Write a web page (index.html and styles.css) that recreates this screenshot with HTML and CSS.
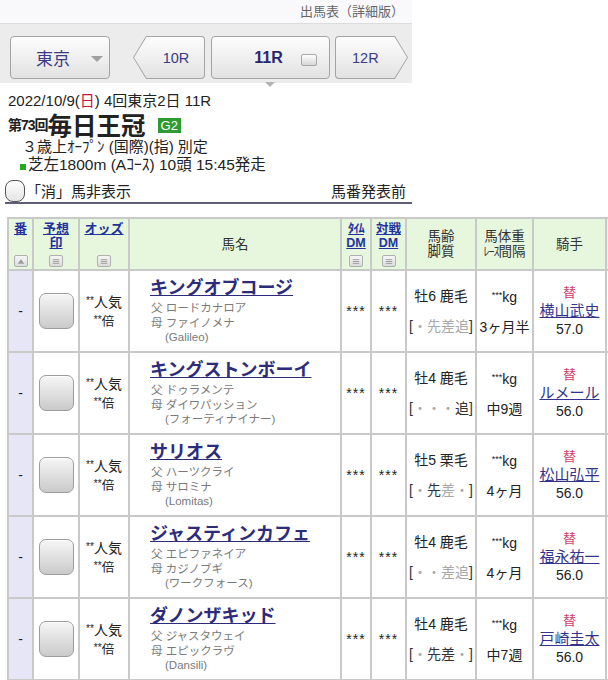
FILE: index.html
```html
<!DOCTYPE html>
<html lang="ja">
<head>
<meta charset="utf-8">
<title>出馬表（詳細版）</title>
<link rel="stylesheet" href="styles.css">
</head>
<body>
<div class="page">
  <header class="top">
    <div class="title">出馬表（詳細版）</div>
    <nav class="racenav">
      <div class="btn place">東京<span class="caret"></span></div>
      <div class="arrow prev"><div class="arrow-in">10R</div></div>
      <div class="btn cur">11R<span class="sq"></span></div>
      <div class="arrow next"><div class="arrow-in">12R</div></div>
    </nav>
    <div class="info">
      <div class="date">2022/10/9(<span class="sun">日</span>) 4回東京2日 11R</div>
      <div class="race"><span class="kai">第73回</span><span class="rname">毎日王冠</span><span class="grade">G2</span></div>
      <div class="cond">３歳上ｵｰﾌﾟﾝ (国際)(指) 別定</div>
      <div class="course"><span class="turf"></span>芝左1800m (Aｺｰｽ) 10頭 15:45発走</div>
      <div class="opts"><span class="hide"><span class="cb"></span>「消」馬非表示</span><span>馬番発表前</span></div>
    </div>
  </header>

  <table class="entries">
    <colgroup>
      <col class="c-no"><col class="c-mark"><col class="c-odds"><col class="c-horse"><col class="c-tdm"><col class="c-vdm"><col class="c-age"><col class="c-wt"><col class="c-jk"><col class="c-more">
    </colgroup>
    <thead>
      <tr>
        <th><div class="hc"><a class="lnk">番</a><span class="ic"><svg viewBox="0 0 13 11" width="13" height="11"><path d="M3 8 L6.5 3 L10 8 Z" fill="#9a9a9a"/></svg></span></div></th>
        <th><div class="hc"><a class="lnk">予想<br>印</a><span class="ic"><svg viewBox="0 0 13 11" width="13" height="11"><path d="M3 3.5H10M3 5.5H10M3 7.5H10" stroke="#9a9a9a" stroke-width="1"/></svg></span></div></th>
        <th><div class="hc"><a class="lnk">オッズ</a><span class="ic"><svg viewBox="0 0 13 11" width="13" height="11"><path d="M3 3.5H10M3 5.5H10M3 7.5H10" stroke="#9a9a9a" stroke-width="1"/></svg></span></div></th>
        <th class="plain">馬名</th>
        <th><div class="hc"><a class="lnk sm"><span class="hk">ﾀｲﾑ</span><br>DM</a><span class="ic"><svg viewBox="0 0 13 11" width="13" height="11"><path d="M3 3.5H10M3 5.5H10M3 7.5H10" stroke="#9a9a9a" stroke-width="1"/></svg></span></div></th>
        <th><div class="hc"><a class="lnk sm">対戦<br>DM</a><span class="ic"><svg viewBox="0 0 13 11" width="13" height="11"><path d="M3 3.5H10M3 5.5H10M3 7.5H10" stroke="#9a9a9a" stroke-width="1"/></svg></span></div></th>
        <th class="plain">馬齢<br>脚質</th>
        <th class="plain">馬体重<br><span class="hk2">ﾚｰｽ</span>間隔</th>
        <th class="plain">騎手</th>
        <th class="plain"></th>
      </tr>
    </thead>
    <tbody>
      <tr>
        <td class="no">-</td>
        <td><span class="markbtn"></span></td>
        <td class="odds"><div><small>**</small>人気</div><div class="bai"><small>**</small>倍</div></td>
        <td class="horse"><a class="hname">キングオブコージ</a><div class="ped">父 ロードカナロア<br>母 ファイノメナ<br><span class="bms">(Galileo)</span></div></td>
        <td class="dm">***</td>
        <td class="dm">***</td>
        <td class="two"><div>牡6 鹿毛</div><div class="legs">[<span class="off">・先差追</span>]</div></td>
        <td class="two"><div><small class="st">***</small>kg</div><div>3ヶ月半</div></td>
        <td class="jk"><div class="chg">替</div><a class="jname">横山武史</a><div>57.0</div></td>
        <td></td>
      </tr>
      <tr>
        <td class="no">-</td>
        <td><span class="markbtn"></span></td>
        <td class="odds"><div><small>**</small>人気</div><div class="bai"><small>**</small>倍</div></td>
        <td class="horse"><a class="hname">キングストンボーイ</a><div class="ped">父 ドゥラメンテ<br>母 ダイワパッション<br><span class="bms">(フォーティナイナー)</span></div></td>
        <td class="dm">***</td>
        <td class="dm">***</td>
        <td class="two"><div>牡4 鹿毛</div><div class="legs">[<span class="off">・・・</span>追]</div></td>
        <td class="two"><div><small class="st">***</small>kg</div><div>中9週</div></td>
        <td class="jk"><div class="chg">替</div><a class="jname">ルメール</a><div>56.0</div></td>
        <td></td>
      </tr>
      <tr>
        <td class="no">-</td>
        <td><span class="markbtn"></span></td>
        <td class="odds"><div><small>**</small>人気</div><div class="bai"><small>**</small>倍</div></td>
        <td class="horse"><a class="hname">サリオス</a><div class="ped">父 ハーツクライ<br>母 サロミナ<br><span class="bms">(Lomitas)</span></div></td>
        <td class="dm">***</td>
        <td class="dm">***</td>
        <td class="two"><div>牡5 栗毛</div><div class="legs">[<span class="off">・</span>先<span class="off">差・</span>]</div></td>
        <td class="two"><div><small class="st">***</small>kg</div><div>4ヶ月</div></td>
        <td class="jk"><div class="chg">替</div><a class="jname">松山弘平</a><div>56.0</div></td>
        <td></td>
      </tr>
      <tr>
        <td class="no">-</td>
        <td><span class="markbtn"></span></td>
        <td class="odds"><div><small>**</small>人気</div><div class="bai"><small>**</small>倍</div></td>
        <td class="horse"><a class="hname">ジャスティンカフェ</a><div class="ped">父 エピファネイア<br>母 カジノブギ<br><span class="bms">(ワークフォース)</span></div></td>
        <td class="dm">***</td>
        <td class="dm">***</td>
        <td class="two"><div>牡4 鹿毛</div><div class="legs">[<span class="off">・・差追</span>]</div></td>
        <td class="two"><div><small class="st">***</small>kg</div><div>4ヶ月</div></td>
        <td class="jk"><div class="chg">替</div><a class="jname">福永祐一</a><div>56.0</div></td>
        <td></td>
      </tr>
      <tr>
        <td class="no">-</td>
        <td><span class="markbtn"></span></td>
        <td class="odds"><div><small>**</small>人気</div><div class="bai"><small>**</small>倍</div></td>
        <td class="horse"><a class="hname">ダノンザキッド</a><div class="ped">父 ジャスタウェイ<br>母 エピックラヴ<br><span class="bms">(Dansili)</span></div></td>
        <td class="dm">***</td>
        <td class="dm">***</td>
        <td class="two"><div>牡4 鹿毛</div><div class="legs">[<span class="off">・</span>先差<span class="off">・</span>]</div></td>
        <td class="two"><div><small class="st">***</small>kg</div><div>中7週</div></td>
        <td class="jk"><div class="chg">替</div><a class="jname">戸崎圭太</a><div>56.0</div></td>
        <td></td>
      </tr>
    </tbody>
  </table>
</div>
</body>
</html>
```
FILE: styles.css
```css
* { box-sizing: border-box; margin: 0; padding: 0; }
html, body { overflow: hidden; background: #fff; }
body {
  width: 608px;
  height: 680px;
  font-family: "Liberation Sans", "Noto Sans CJK JP", sans-serif;
  color: #222;
}
.page { width: 680px; }
.top { width: 412px; }

.title {
  height: 24px;
  border-bottom: 1px solid #dcdcdc;
  background: #f9f9fb;
  text-align: right;
  font-size: 13px;
  line-height: 14px;
  color: #666;
  padding: 5px 8px 0 0;
}

.racenav {
  position: relative;
  display: flex;
  align-items: flex-start;
  height: 59px;
  padding: 12px 0 0 10px;
  background: #ececec;
}
.btn {
  height: 43px;
  border: 1px solid #a4a4a4;
  border-radius: 4px;
  background: linear-gradient(#fdfdfd, #e2e2e2);
  display: flex;
  align-items: center;
  justify-content: center;
  color: #3b3b86;
}
.place {
  width: 100px;
  font-size: 17px;
  padding-right: 14px;
  position: relative;
}
.caret {
  position: absolute;
  right: 6px;
  top: 19px;
  width: 0; height: 0;
  border-left: 6px solid transparent;
  border-right: 6px solid transparent;
  border-top: 6px solid #a0a0a0;
}
.arrow {
  height: 43px;
  background: #a4a4a4;
  padding: 1px;
  border-radius: 4px;
}
.arrow-in {
  height: 41px;
  background: linear-gradient(#fdfdfd, #e2e2e2);
  border-radius: 3px;
  display: flex;
  align-items: center;
  font-size: 14.5px;
  color: #3b3b86;
}
.prev {
  width: 72px;
  margin-left: 23px;
  clip-path: polygon(13px 0, 100% 0, 100% 100%, 13px 100%, 0 50%);
}
.prev .arrow-in {
  clip-path: polygon(12.5px 0, 100% 0, 100% 100%, 12.5px 100%, 0 50%);
  justify-content: center;
  padding-left: 14px;
}
.next {
  width: 73px;
  margin-left: 5px;
  clip-path: polygon(0 0, calc(100% - 13px) 0, 100% 50%, calc(100% - 13px) 100%, 0 100%);
}
.next .arrow-in {
  clip-path: polygon(0 0, calc(100% - 12.5px) 0, 100% 50%, calc(100% - 12.5px) 100%, 0 100%);
  padding-left: 16px;
}
.cur {
  width: 119px;
  margin-left: 6px;
  font-size: 16px;
  font-weight: bold;
  color: #27276b;
  padding-right: 4px;
  position: relative;
}
.cur .sq {
  position: absolute;
  left: 89px;
  top: 17px;
  width: 16px;
  height: 12px;
  border: 1px solid #a8a8a8;
  border-radius: 2px;
  background: linear-gradient(#fff, #d6d6d6);
}
.cur::after {
  content: "";
  position: absolute;
  left: 53px;
  top: 45px;
  border-left: 5px solid transparent;
  border-right: 5px solid transparent;
  border-top: 5px solid #b4b4b4;
}

.info { padding: 9px 0 0 8px; }
.date { font-size: 15px; line-height: 18px; }
.sun { color: #c8163a; }
.race { display: flex; align-items: center; height: 28px; }
.kai { font-size: 14px; font-weight: bold; letter-spacing: -1px; }
.rname { font-size: 24.5px; font-weight: bold; letter-spacing: 0; }
.grade {
  margin-left: 12px;
  background: #2e9a32;
  color: #fff;
  font-size: 13px;
  line-height: 15px;
  padding: 0 3px;
  margin-top: 2px;
}
.cond { padding-left: 14px; font-size: 15px; line-height: 18px; }
.course { padding-left: 12px; font-size: 15.5px; line-height: 18px; display: flex; align-items: center; }
.turf { width: 6px; height: 6px; background: #22aa22; margin-right: 2px; margin-top: 3px; }
.opts {
  margin: 5px 0 0 -3px;
  height: 25px;
  border-bottom: 2px solid #5e5e78;
  display: flex;
  justify-content: space-between;
  align-items: center;
  font-size: 15px;
  padding-right: 6px;
}
.hide { display: flex; align-items: center; }
.cb {
  width: 20px; height: 22px;
  border: 1px solid #555;
  border-radius: 8px;
  background: linear-gradient(#fff, #e4e4e4);
  margin-right: 1px;
}

.entries {
  border-collapse: collapse;
  table-layout: fixed;
  width: 658px;
  margin: 13px 0 0 7px;
}
.c-no { width: 25px; }
.c-mark { width: 46px; }
.c-odds { width: 50px; }
.c-horse { width: 212px; }
.c-tdm { width: 30px; }
.c-vdm { width: 35px; }
.c-age { width: 70px; }
.c-wt { width: 57px; }
.c-jk { width: 73px; }
.c-more { width: 60px; }

.entries th, .entries td {
  border: 2px solid #c9c9c9;
  text-align: center;
  vertical-align: middle;
}
.entries th {
  height: 52px;
  background: #e7f7dd;
  font-weight: normal;
  font-size: 13.5px;
  line-height: 15px;
  color: #333;
  padding: 0;
}
.hc {
  height: 48px;
  display: flex;
  flex-direction: column;
  align-items: center;
  justify-content: space-between;
  padding: 2px 0 1px;
}
.lnk {
  color: #2233a0;
  text-decoration: underline;
  font-weight: bold;
  font-size: 13px;
  line-height: 14px;
}
.lnk.sm { font-size: 12.5px; }
.hk { font-size: 12.5px; letter-spacing: -1px; }
.hk2 { font-size: 12px; letter-spacing: -1px; }
.ic {
  width: 14px;
  height: 12px;
  border: 1px solid #b0b0b0;
  border-radius: 2px;
  background: linear-gradient(#f6f6f6, #dcdcdc);
  display: flex;
}
.ic svg { display: block; }

.entries td { height: 82px; font-size: 14px; color: #222; padding: 0; }
.entries td.no { background: #e6e6f6; font-size: 14px; }
.markbtn {
  display: inline-block;
  width: 35px;
  height: 36px;
  border: 1px solid #9c9c9c;
  border-radius: 7px;
  background: linear-gradient(#f6f6f6, #cacaca);
  box-shadow: inset 0 1px 0 #fff;
  vertical-align: middle;
}
.odds { font-size: 14.5px; line-height: 17px; }
.odds small { font-size: 10px; vertical-align: 3px; }
.odds .bai { font-size: 12.5px; }
.horse { text-align: left !important; padding-left: 20px !important; }
.hname {
  display: block;
  font-size: 18px;
  line-height: 22px;
  font-weight: bold;
  color: #2c2c7a;
  text-decoration: underline;
  white-space: nowrap;
  margin-bottom: 2px;
}
.ped { font-size: 11.5px; line-height: 14.5px; color: #7a7a7a; padding-left: 1px; }
.bms { padding-left: 14px; }
.dm { font-size: 9px; color: #555; letter-spacing: 1px; }
.two { line-height: 17px; }
.two div + div { margin-top: 13px; }
.legs { color: #333; }
.off { color: #a8a8a8; }
.st { font-size: 9px; vertical-align: 4px; }
.jk { line-height: 18px; }
.chg { color: #d0406a; font-size: 13px; }
.jname { color: #33338e; text-decoration: underline; font-size: 15px; }
```
